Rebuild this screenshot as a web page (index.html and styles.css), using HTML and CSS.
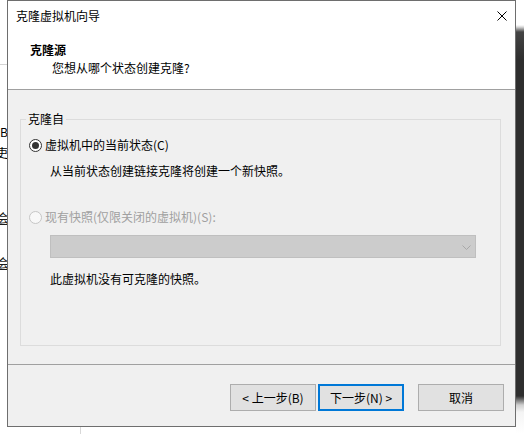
FILE: index.html
```html
<!DOCTYPE html>
<html lang="zh-CN">
<head>
<meta charset="utf-8">
<title>克隆虚拟机向导</title>
<link rel="stylesheet" href="styles.css">
</head>
<body>
<div class="screen">
  <div class="left-edge">
    <div class="le-line"></div>
    <div class="le-t le-b">B</div>
    <div class="le-t le-g">吏</div>
    <div class="le-t le-u le-u1">会</div>
    <div class="le-t le-u le-u2">会</div>
  </div>
  <div class="center">
    <div class="dialog">
      <div class="top">
        <div class="titlebar">
          <span class="title">克隆虚拟机向导</span>
          <svg class="close" width="10" height="10" viewBox="0 0 10 10"><path d="M0.5 0.5 L9.5 9.5 M9.5 0.5 L0.5 9.5" stroke="#000" stroke-width="1" fill="none"/></svg>
        </div>
        <div class="header">
          <div class="h-title">克隆源</div>
          <div class="h-sub">您想从哪个状态创建克隆?</div>
        </div>
      </div>
      <div class="body">
        <fieldset class="group">
          <legend class="legend">克隆自</legend>
          <div class="radio-row">
            <span class="radio checked"></span><span class="radio-label">虚拟机中的当前状态(C)</span>
          </div>
          <div class="desc">从当前状态创建链接克隆将创建一个新快照。</div>
          <div class="radio-row disabled second">
            <span class="radio"></span><span class="radio-label">现有快照(仅限关闭的虚拟机)(S):</span>
          </div>
          <div class="combo">
            <svg class="chev" width="9" height="5" viewBox="0 0 9 5"><path d="M0.5 0.5 L4.5 4.5 L8.5 0.5" stroke="#a8a8a8" stroke-width="1" fill="none"/></svg>
          </div>
          <div class="desc note">此虚拟机没有可克隆的快照。</div>
        </fieldset>
      </div>
      <div class="footer">
        <div class="btn">&lt; 上一步(B)</div>
        <div class="btn btn-default">下一步(N) &gt;</div>
        <div class="btn btn-cancel">取消</div>
      </div>
    </div>
    <div class="below"><div class="below-line"></div></div>
  </div>
  <div class="right-edge"></div>
</div>
</body>
</html>
```

FILE: styles.css
```css
html, body {
  margin: 0;
  padding: 0;
  background: #ffffff;
}
body {
  width: 524px;
  height: 434px;
  overflow: hidden;
  font-family: "Noto Sans CJK SC", "Microsoft YaHei", sans-serif;
  font-size: 12px;
  line-height: 16px;
  color: #000;
}
.screen {
  display: flex;
  width: 524px;
  height: 434px;
}
.left-edge {
  width: 7px;
  flex: none;
  overflow: hidden;
  background: #fff;
}
.le-line {
  height: 1px;
  margin-top: 64px;
  background: #d4d4d4;
}
.le-t {
  height: 16px;
  white-space: nowrap;
  font-size: 12px;
  line-height: 16px;
  color: #000;
}
.le-b { margin-top: 59px; }
.le-g { margin-top: 5px; margin-left: -4px; }
.le-u { text-decoration: underline; margin-left: -3px; color: #1a1a1a; }
.le-u1 { margin-top: 49px; }
.le-u2 { margin-top: 29px; }

.center {
  width: 509px;
  flex: none;
  display: flex;
  flex-direction: column;
}
.dialog {
  width: 509px;
  height: 427px;
  box-sizing: border-box;
  border: 1px solid #6e6e6e;
  display: flex;
  flex-direction: column;
  background: #f0f0f0;
}
.top {
  background: #fff;
  height: 89px;
  box-sizing: border-box;
  border-bottom: 1px solid #a0a0a0;
}
.titlebar {
  height: 30px;
  display: flex;
  align-items: center;
  justify-content: space-between;
  padding: 0 8px 0 8px;
}
.title {
  line-height: 16px;
}
.close {
  display: block;
  margin-top: -1px;
}
.header {
  padding: 11px 0 0 22px;
}
.h-title {
  font-weight: bold;
  line-height: 16px;
}
.h-sub {
  margin-top: 2px;
  padding-left: 22px;
  line-height: 16px;
}
.body {
  height: 274px;
  padding-top: 21px;
  box-sizing: border-box;
}
.group {
  margin: 0 14px 0 12px;
  padding: 0 0 0 8px;
  border: 1px solid #dcdcdc;
  height: 235px;
  box-sizing: border-box;
  min-width: 0;
}
.legend {
  padding: 0 2px;
  margin-left: -3px;
  line-height: 16px;
}
.radio-row {
  display: flex;
  align-items: center;
  height: 16px;
  margin-top: 10px;
}
.radio-row.second {
  margin-top: 30px;
}
.radio {
  width: 13px;
  height: 13px;
  box-sizing: border-box;
  border-radius: 50%;
  border: 1px solid #333;
  background: #fff;
  margin-right: 3px;
  display: flex;
  align-items: center;
  justify-content: center;
  flex: none;
}
.radio.checked::after {
  content: "";
  width: 7px;
  height: 7px;
  border-radius: 50%;
  background: #333;
}
.disabled .radio {
  border-color: #c6c6c6;
  background: #f8f8f8;
}
.disabled .radio-label {
  color: #a0a0a0;
}
.desc {
  margin-top: 10px;
  padding-left: 21px;
  line-height: 16px;
}
.combo {
  margin-top: 10px;
  margin-left: 21px;
  width: 426px;
  height: 23px;
  box-sizing: border-box;
  background: #cccccc;
  border: 1px solid #bfbfbf;
  display: flex;
  align-items: center;
  justify-content: flex-end;
  padding-right: 4px;
}
.chev {
  display: block;
  margin-top: 1px;
}
.desc.note {
  margin-top: 13px;
}
.footer {
  flex: 1;
  border-top: 1px solid #a0a0a0;
  display: flex;
  justify-content: flex-end;
  align-items: flex-start;
  padding: 19px 11px 0 0;
}
.btn {
  width: 86px;
  height: 27px;
  box-sizing: border-box;
  background: #e1e1e1;
  border: 1px solid #adadad;
  display: flex;
  align-items: center;
  justify-content: center;
  line-height: 16px;
}
.btn-default {
  border: 2px solid #0078d7;
  margin-left: 2px;
}
.btn-cancel {
  margin-left: 14px;
}
.below {
  height: 7px;
  display: flex;
}
.below-line {
  width: 1px;
  margin-left: 73px;
  background: #d8d8d8;
}
.right-edge {
  width: 8px;
  flex: none;
  background: linear-gradient(to bottom, #ffffff 0, #ffffff 25px, #d8d8d8 27px, #444444 32px, #2e2e2e 60px, #2e2e2e 396px, #cfcfcf 405px, #f4f4f4 412px, #ffffff 434px);
}
```
